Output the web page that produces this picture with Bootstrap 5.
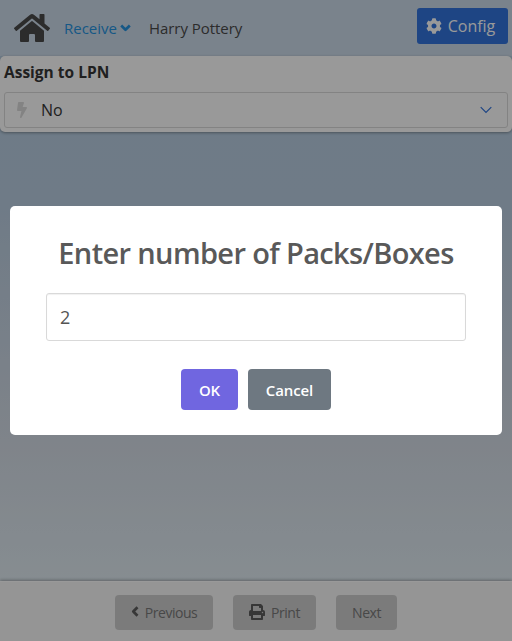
<!DOCTYPE html>
<html lang="en">
<head>
<meta charset="utf-8">
<meta name="viewport" content="width=device-width, initial-scale=1">
<title>Receive</title>
<link href="https://cdn.jsdelivr.net/npm/bootstrap@5.3.0/dist/css/bootstrap.min.css" rel="stylesheet">
<style>
body{font-family:"Open Sans","Noto Sans",sans-serif;font-size:15px;color:#4a4a4a;height:100vh;overflow:hidden;background:linear-gradient(#b8cfe3 56px,#b9cde1 200px,#d4dce6 440px,#e0ebf2 580px)}
svg{fill:currentColor;flex:none;display:block}
.topbar{height:56px;background:#ccdae9;padding:8px 4px 0 14px}
.topbar>*{white-space:nowrap}
.home-ico{margin-top:4px}
.menu-link{margin:8px 0 0 14px;color:#2693e0;line-height:24px;text-decoration:none}
.chev{fill:none;stroke:currentColor;stroke-width:2.7}
.menu-link .chev{margin-left:3px}
.user-name{margin:8px 0 0 18px;line-height:24px}
.fit-receive{letter-spacing:0}
.fit-user{letter-spacing:-.05px}
.config-btn{width:91px;height:36px;border-radius:3px;background:#3273dc;color:#fff;font-size:16px;letter-spacing:-.05px;padding:0 4px 0 0;border:0;gap:6px}
.panel{height:76px;border-radius:5px;background:#fff;padding:4px;box-shadow:0 1px 3px rgba(10,10,10,.35)}
.panel-label{font-weight:700;font-size:15.5px;line-height:25px;height:24px;color:#363636;letter-spacing:0}
.picker{height:36px;margin-top:8px;border:1px solid #dbdbdb;border-radius:3px;padding:0 15px 0 12px;color:#363636;font-size:16px}
.picker .bolt{color:#dbdbdb;margin-right:14px}
.picker .arrow{fill:none;stroke:#3273dc;stroke-width:1.2}
.footbar{height:60px;background:#f8f8f8;border-top:1px solid #fff;box-shadow:0 -1px 3px rgba(10,10,10,.3);padding-top:13px;gap:20px}
.step{height:35px;border:0;border-radius:4px;background:#cdcdcd;color:#787878;font-size:14px;letter-spacing:-.48px;padding:0}
.step svg{color:#5c5c5c;margin-bottom:2px}
.w-prev{width:98px;gap:6px}.w-print{width:83px;gap:6px}.w-next{width:61px}
.shade{background:rgba(0,0,0,.4);padding:10px}
.dialog-box{width:492px;height:229px;border-radius:5px;background:#fff;padding:20px 36px;color:#545454}
.dialog-title{font-size:29px;font-weight:600;line-height:40px;margin:7px -10px 0;letter-spacing:-.64px;color:#595959;white-space:nowrap}
.qty{height:48px;margin-top:20px;border:1px solid #d9d9d9;border-radius:3px;padding:0 13px;font-size:18px;color:#545454;box-shadow:inset 0 1px 1px rgba(0,0,0,.06)}
.choices{gap:10px;margin-top:28px}
.choice{height:41px;border:0;border-radius:4px;color:#fff;font-weight:600;font-size:15px;padding:2px 0 0;letter-spacing:-.1px}
.ok{width:57px;background:#7066e0}.cancel{width:83px;background:#6e7881}
.ok:hover{background:#6459d8;color:#fff}.cancel:hover{background:#636c74;color:#fff}
</style>
</head>
<body class="d-flex flex-column">
<header class="topbar d-flex align-items-start">
  <svg class="home-ico" width="36" height="32" viewBox="0 0 576 512"><path d="M280.370 148.260L96 300.110V464a16 16 0 0 0 16 16l112.060-.29a16 16 0 0 0 15.920-16V368a16 16 0 0 1 16-16h64a16 16 0 0 1 16 16v95.640a16 16 0 0 0 16 16.050L464 480a16 16 0 0 0 16-16V300L295.670 148.260a12.190 12.190 0 0 0-15.300 0zM571.600 251.470L488 182.560V44.050a12 12 0 0 0-12-12h-56a12 12 0 0 0-12 12v72.610L318.470 43a48 48 0 0 0-61 0L4.340 251.470a12 12 0 0 0-1.600 16.900l25.500 31A12 12 0 0 0 45.150 301l235.220-193.740a12.190 12.190 0 0 1 15.300 0L530.900 301a12 12 0 0 0 16.900-1.600l25.500-31a12 12 0 0 0-1.700-16.930z"/></svg>
  <a class="menu-link d-flex align-items-center" href="#"><span class="fit-receive">Receive</span>
    <svg class="chev" width="11" height="8" viewBox="0 0 11 8"><path d="M1.200 1.500L5.500 5.700l4.300-4.200" stroke-linejoin="round"/></svg></a>
  <span class="user-name fit-user">Harry Pottery</span>
  <button class="btn config-btn ms-auto d-flex align-items-center justify-content-center">
    <svg width="16" height="16" viewBox="0 0 512 512"><path d="M487.400 315.700l-42.600-24.600c4.300-23.200 4.300-47 0-70.200l42.600-24.600c4.900-2.800 7.100-8.600 5.500-14-11.100-35.600-30-67.800-54.700-94.600-3.800-4.100-10-5.100-14.800-2.300L380.800 110c-17.900-15.400-38.500-27.300-60.800-35.100V25.800c0-5.600-3.900-10.500-9.400-11.700-36.700-8.200-74.300-7.800-109.200 0-5.500 1.200-9.400 6.100-9.400 11.700V75c-22.200 7.900-42.800 19.800-60.800 35.100L88.700 85.500c-4.900-2.800-11-1.900-14.800 2.300-24.700 26.700-43.600 58.900-54.700 94.600-1.700 5.400.6 11.200 5.500 14L67.300 221c-4.300 23.200-4.300 47 0 70.200l-42.600 24.600c-4.900 2.800-7.100 8.600-5.500 14 11.100 35.600 30 67.800 54.700 94.600 3.800 4.100 10 5.100 14.800 2.300l42.600-24.600c17.900 15.400 38.500 27.300 60.800 35.100v49.200c0 5.600 3.900 10.500 9.400 11.700 36.700 8.200 74.300 7.800 109.200 0 5.500-1.200 9.400-6.100 9.400-11.700v-49.200c22.200-7.900 42.800-19.800 60.800-35.100l42.600 24.600c4.900 2.800 11 1.900 14.800-2.300 24.700-26.700 43.600-58.900 54.700-94.600 1.500-5.500-.7-11.300-5.600-14.100zM256 336c-44.100 0-80-35.900-80-80s35.900-80 80-80 80 35.900 80 80-35.900 80-80 80z"/></svg>
    <span>Config</span></button>
</header>
<main class="flex-grow-1">
  <section class="panel">
    <div class="panel-label">Assign to LPN</div>
    <div class="picker d-flex align-items-center">
      <svg class="bolt" width="10" height="16" viewBox="0 0 320 512"><path d="M296 160H180.600l42.600-129.800C227.200 15 215.700 0 200 0H56C44 0 33.800 8.900 32.200 20.800l-32 240C-1.700 275.200 9.500 288 24 288h118.700L96.600 482.500c-3.600 15.200 8 29.500 23.300 29.500 8.400 0 16.400-4.400 20.800-12l176-304c9.300-15.900-2.200-36-20.700-36z"/></svg>
      <span>No</span>
      <svg class="arrow ms-auto" width="12" height="8" viewBox="0 0 12 8"><path d="M.7 1.200L6 6.500l5.300-5.300"/></svg>
    </div>
  </section>
</main>
<footer class="footbar d-flex justify-content-center align-items-start">
  <button class="btn step w-prev d-flex align-items-center justify-content-center"><svg class="chev" width="8" height="11" viewBox="0 0 8 11"><path d="M6.500 1.200L2.300 5.500l4.200 4.300" stroke-linejoin="round"/></svg><span>Previous</span></button>
  <button class="btn step w-print d-flex align-items-center justify-content-center"><svg width="16" height="16" viewBox="0 0 512 512"><path d="M448 192V77.250c0-8.490-3.370-16.620-9.370-22.630L393.370 9.370c-6-6-14.140-9.370-22.630-9.370H96C78.330 0 64 14.330 64 32v160c-35.350 0-64 28.650-64 64v112c0 8.840 7.160 16 16 16h48v96c0 17.670 14.330 32 32 32h320c17.670 0 32-14.330 32-32v-96h48c8.840 0 16-7.160 16-16V256c0-35.350-28.650-64-64-64zm-64 256H128v-96h256v96zm0-224H128V64h192v48c0 8.840 7.160 16 16 16h48v96zm48 72c-13.250 0-24-10.750-24-24 0-13.260 10.750-24 24-24s24 10.740 24 24c0 13.250-10.750 24-24 24z"/></svg><span>Print</span></button>
  <button class="btn step w-next">Next</button>
</footer>
<div class="shade position-fixed top-0 start-0 w-100 h-100 d-flex align-items-center justify-content-center">
  <div class="dialog-box" role="dialog" aria-modal="true">
    <h2 class="dialog-title text-center">Enter number of Packs/Boxes</h2>
    <input class="qty form-control" type="text" value="2" aria-label="Enter number of Packs/Boxes">
    <div class="choices d-flex justify-content-center">
      <button class="btn choice ok">OK</button>
      <button class="btn choice cancel">Cancel</button>
    </div>
  </div>
</div>
<script src="https://cdn.jsdelivr.net/npm/bootstrap@5.3.0/dist/js/bootstrap.bundle.min.js"></script>
</body>
</html>
